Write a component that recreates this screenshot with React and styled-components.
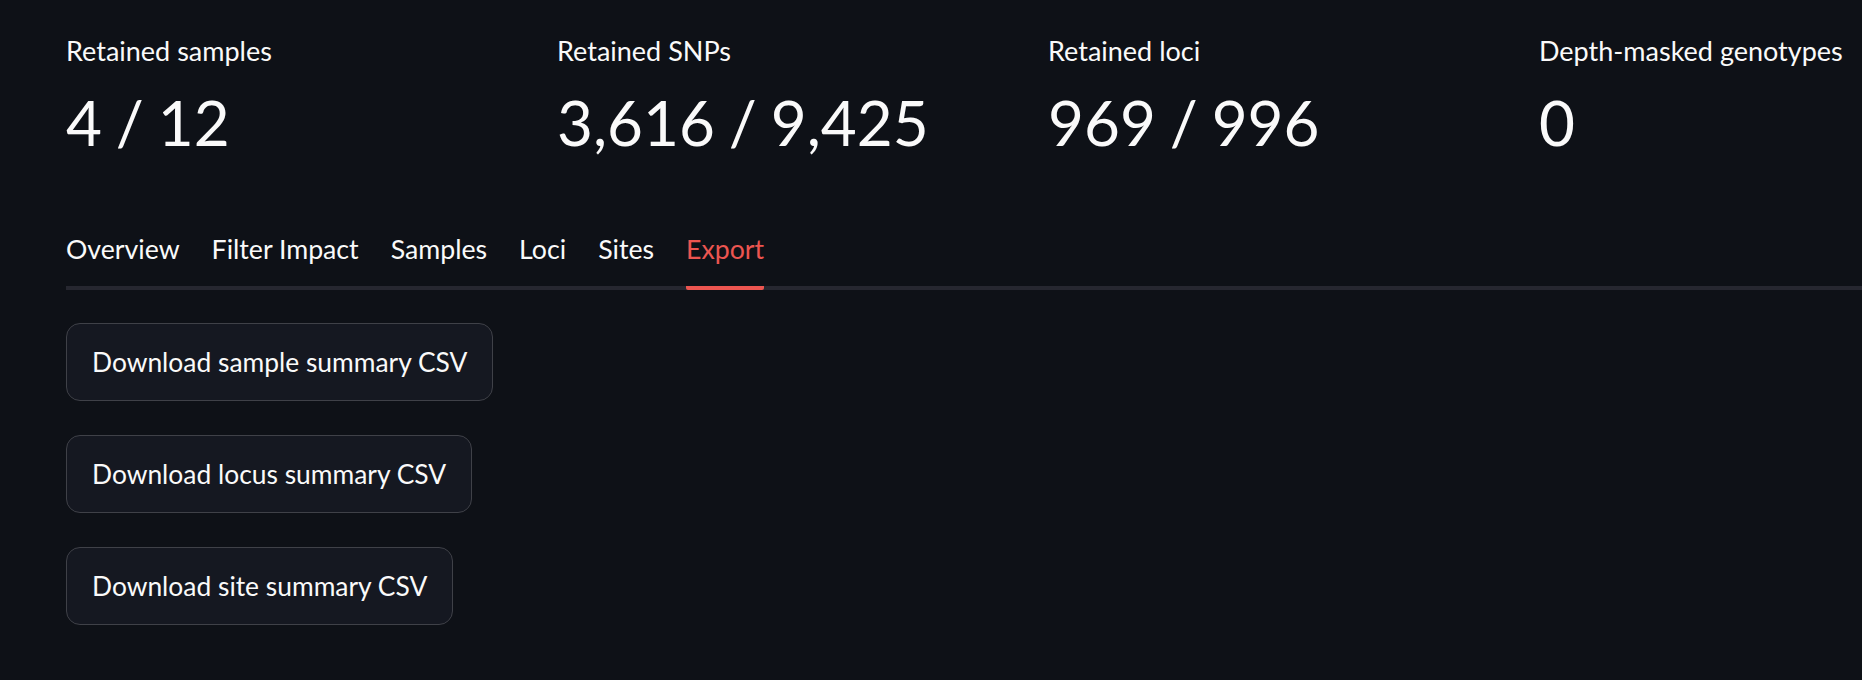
import React from "react";
import styled, { createGlobalStyle } from "styled-components";

const GlobalStyle = createGlobalStyle`
  html, body {
    margin: 0;
    padding: 0;
    background: #0e1117;
    overflow: hidden;
  }
  body {
    font-family: Lato, "Noto Sans", sans-serif;
    color: #fafafa;
  }
  * { box-sizing: border-box; }
`;

const Page = styled.main`
  width: 1935px;
  padding: 33px 0 0 66px;
  box-sizing: content-box;
  display: flex;
  flex-direction: column;
  min-height: 680px;
`;

const MetricsRow = styled.section`
  display: grid;
  grid-template-columns: repeat(4, 1fr);
  column-gap: 29px;
`;

const Metric = styled.div`
  display: flex;
  flex-direction: column;
  gap: 13px;
`;

const MetricLabel = styled.div`
  font-size: 27px;
  line-height: 36px;
  color: #fafafa;
  white-space: nowrap;
`;

const MetricValue = styled.div`
  font-size: 62px;
  line-height: 80px;
  word-spacing: -2px;
  color: #fafafa;
  white-space: nowrap;
`;

const TabList = styled.nav`
  margin-top: 69px;
  display: flex;
  gap: 32px;
  border-bottom: 4px solid #262730;
`;

const Tab = styled.button`
  appearance: none;
  background: none;
  border: none;
  border-bottom: 4px solid ${(p) => (p.$active ? "#ec5550" : "transparent")};
  border-radius: 2px;
  margin: 0 0 -4px;
  padding: 0 0 19px;
  font-family: inherit;
  font-size: 26.7px;
  line-height: 36px;
  color: ${(p) => (p.$active ? "#ec5550" : "#fafafa")};
  cursor: pointer;
  white-space: nowrap;
`;

const ButtonStack = styled.div`
  margin-top: 33px;
  display: flex;
  flex-direction: column;
  align-items: flex-start;
  gap: 34px;
`;

const DownloadButton = styled.button`
  appearance: none;
  background: #151821;
  border: 1px solid #3f4148;
  border-radius: 14px;
  padding: 20px 25px;
  font-family: inherit;
  font-size: 26.4px;
  line-height: 36px;
  color: #fafafa;
  cursor: pointer;
  white-space: nowrap;
`;

const metrics = [
  { label: "Retained samples", value: "4 / 12" },
  { label: "Retained SNPs", value: "3,616 / 9,425" },
  { label: "Retained loci", value: "969 / 996" },
  { label: "Depth-masked genotypes", value: "0" },
];

const tabs = ["Overview", "Filter Impact", "Samples", "Loci", "Sites", "Export"];

const downloads = [
  "Download sample summary CSV",
  "Download locus summary CSV",
  "Download site summary CSV",
];

export default function App() {
  return (
    <>
      <GlobalStyle />
      <Page>
        <MetricsRow>
          {metrics.map((m) => (
            <Metric key={m.label}>
              <MetricLabel>{m.label}</MetricLabel>
              <MetricValue>{m.value}</MetricValue>
            </Metric>
          ))}
        </MetricsRow>
        <TabList>
          {tabs.map((t) => (
            <Tab key={t} $active={t === "Export"}>
              {t}
            </Tab>
          ))}
        </TabList>
        <ButtonStack>
          {downloads.map((d) => (
            <DownloadButton key={d}>{d}</DownloadButton>
          ))}
        </ButtonStack>
      </Page>
    </>
  );
}
